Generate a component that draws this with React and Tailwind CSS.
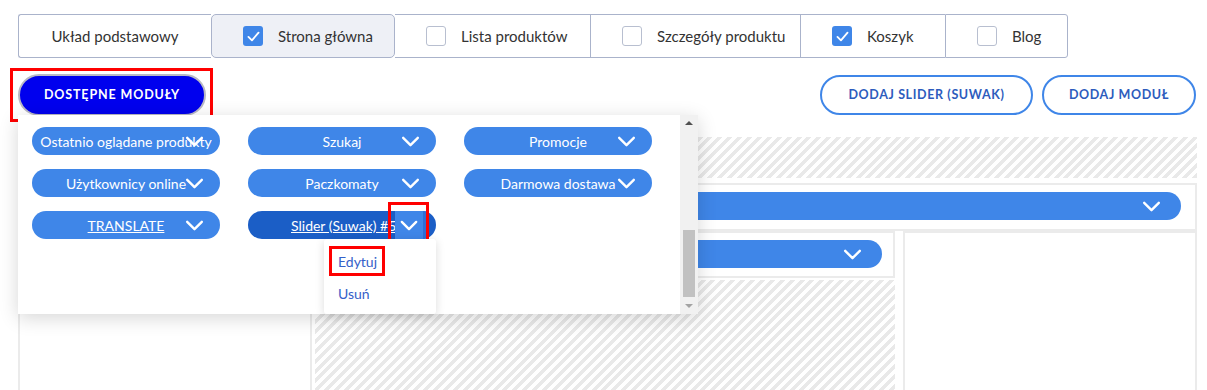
import React from 'react';

const tabs = [
  { label: 'Układ podstawowy', w: 'w-[193px]', box: false },
  { label: 'Strona główna', w: 'w-[184px]', box: true, checked: true, active: true },
  { label: 'Lista produktów', w: 'w-[195px]', box: true },
  { label: 'Szczegóły produktu', w: 'w-[210px]', box: true },
  { label: 'Koszyk', w: 'w-[145px]', box: true, checked: true },
  { label: 'Blog', w: 'w-[123px]', box: true },
];

const modules = [
  { label: 'Ostatnio oglądane produkty' },
  { label: 'Szukaj' },
  { label: 'Promocje' },
  { label: 'Użytkownicy online' },
  { label: 'Paczkomaty' },
  { label: 'Darmowa dostawa' },
  { label: 'TRANSLATE', link: true },
  { label: 'Slider (Suwak) #5', link: true, open: true },
];

function Chevron({ className = '' }) {
  return (
    <svg viewBox="0 0 20 12" className={className} fill="none">
      <path d="M2 2l8 8 8-8" stroke="white" strokeWidth="2.6" strokeLinecap="round" strokeLinejoin="round" />
    </svg>
  );
}

function Checkbox({ checked }) {
  if (checked) {
    return (
      <span className="flex h-[20px] w-[20px] shrink-0 items-center justify-center rounded-[3px] bg-[#3f86e8]">
        <svg viewBox="0 0 14 12" className="h-[11px] w-[13px]" fill="none">
          <path d="M1.5 6.5l3.8 3.7L12.5 1.8" stroke="white" strokeWidth="2" strokeLinecap="round" strokeLinejoin="round" />
        </svg>
      </span>
    );
  }
  return <span className="h-[20px] w-[20px] shrink-0 rounded-[3px] border border-[#b8bfd0] bg-white" />;
}

const hatch =
  'bg-[image:repeating-linear-gradient(135deg,#e9e9e9_0px,#e9e9e9_3.5px,#ffffff_3.5px,#ffffff_7px)]';

function ModulePill({ m }) {
  if (m.open) {
    return (
      <div className="relative h-[28px] w-[188px]">
        <div className="flex h-full items-center overflow-hidden rounded-full bg-[#1b5ec6] pl-[43px] text-[14px] text-white">
          <span className="w-[104px] overflow-hidden whitespace-nowrap underline">{m.label}</span>
          <span className="flex h-full w-[31px] shrink-0 items-center justify-center border-r-[3px] border-[#2f6fd6] bg-[#3f86e8]">
            <Chevron className="h-[11px] w-[18px]" />
          </span>
        </div>
        <div className="absolute left-[140px] top-[-9px] h-[40px] w-[41px] border-[3px] border-[#ff0000]" />
        <div className="absolute left-[76px] top-[28px] z-10 h-[75px] w-[112px] rounded-[3px] bg-white py-[7px] text-[14px] text-[#3560c9] shadow-[0_2px_10px_rgba(0,0,0,0.14)]">
          <div className="ml-[5px] flex h-[30px] w-[56px] items-center border-[3px] border-[#ff0000] pl-[6px]">Edytuj</div>
          <div className="ml-[14px] mt-[2px] flex h-[30px] items-center">Usuń</div>
        </div>
      </div>
    );
  }
  return (
    <div className="relative flex h-[28px] w-[188px] items-center justify-center rounded-full bg-[#3f86e8] text-[14px] text-white">
      <span className={'whitespace-nowrap ' + (m.link ? 'underline' : '')}>{m.label}</span>
      <Chevron className="absolute right-[16px] top-[9px] h-[11px] w-[19px]" />
    </div>
  );
}

export default function App() {
  return (
    <div className="relative h-[390px] w-[1207px] overflow-hidden bg-white font-['Lato','Noto_Sans',sans-serif] text-[#333]">
      {/* page tabs */}
      <div className="ml-[18px] mt-[14px] flex h-[44px]">
        {tabs.map((t, i) => (
          <div
            key={t.label}
            className={
              t.w +
              ' flex items-center gap-[15px] border-y border-[#aab3cb] px-[31px] text-[15px] ' +
              (i === 0 ? 'justify-center border-l rounded-l-[3px] ' : '') +
              (i === tabs.length - 1 ? 'border-r rounded-r-[3px] ' : '') +
              (t.active ? 'rounded-[5px] border-x bg-[#eef0f6] ' : i > 0 && !tabs[i - 1].active ? 'border-l ' : '')
            }
          >
            {t.box && <Checkbox checked={t.checked} />}
            <span className="whitespace-nowrap">{t.label}</span>
          </div>
        ))}
      </div>

      {/* actions */}
      <div className="mt-[10px] flex items-center justify-between pl-[10px] pr-[11px]">
        <div className="border-[3px] border-[#ff0000] py-[3px] pl-[5px] pr-[4px]">
          <button className="h-[42px] w-[188px] rounded-full border-2 border-[#b9b9c4] bg-[#0000ee] text-[12.5px] font-bold tracking-[0.07em] text-white">
            DOSTĘPNE MODUŁY
          </button>
        </div>
        <div className="flex gap-[9px]">
          <button className="h-[40px] w-[213px] rounded-full border-2 border-[#3f86e8] text-[12.5px] font-bold tracking-[0.05em] text-[#2d5cbd]">
            DODAJ SLIDER (SUWAK)
          </button>
          <button className="h-[40px] w-[154px] rounded-full border-2 border-[#3f86e8] text-[12.5px] font-bold tracking-[0.05em] text-[#2d5cbd]">
            DODAJ MODUŁ
          </button>
        </div>
      </div>

      {/* layout preview */}
      <div className="ml-[18px] mr-[10px] mt-[11px] flex">
        <div className="h-[260px] w-[294px] shrink-0 border-2 border-[#ebebeb]" />
        <div className="flex flex-1 flex-col">
          <div className={'mt-[4px] h-[41px] ' + hatch} />
          <div className="mt-[5px] h-[48px] border-2 border-[#ebebeb] pl-[10px] pr-[14px] pt-[7px]">
            <div className="flex h-[28px] items-center justify-end rounded-full bg-[#3f86e8] pr-[20px]">
              <Chevron className="h-[11px] w-[19px]" />
            </div>
          </div>
          <div className="flex gap-[8px]">
            <div className="flex w-[583px] flex-col">
              <div className="h-[47px] border-2 border-[#ebebeb] pl-[10px] pr-[11px] pt-[7px]">
                <div className="flex h-[28px] items-center justify-end rounded-full bg-[#3f86e8] pr-[20px]">
                  <Chevron className="h-[11px] w-[19px]" />
                </div>
              </div>
              <div className={'ml-[3px] mt-[2px] h-[120px] ' + hatch} />
            </div>
            <div className="h-[170px] flex-1 border-2 border-[#ebebeb]" />
          </div>
        </div>
      </div>

      {/* available modules panel */}
      <div className="absolute left-[18px] top-[115px] h-[199px] w-[680px] bg-white shadow-[0_4px_18px_rgba(0,0,0,0.16)]">
        <div className="grid grid-cols-[188px_188px_188px] gap-x-[28px] gap-y-[14px] pl-[14px] pt-[12px]">
          {modules.map((m) => (
            <ModulePill key={m.label} m={m} />
          ))}
        </div>
        <div className="absolute right-0 top-0 flex h-full w-[18px] flex-col items-center bg-[#f1f1f1]">
          <span className="mt-[6px] h-0 w-0 border-x-[4px] border-b-[4px] border-x-transparent border-b-[#505050]" />
          <span className="mt-[105px] h-[67px] w-[12px] bg-[#c1c1c1]" />
          <span className="mt-[7px] h-0 w-0 border-x-[4px] border-t-[4px] border-x-transparent border-t-[#a3a3a3]" />
        </div>
      </div>
    </div>
  );
}
